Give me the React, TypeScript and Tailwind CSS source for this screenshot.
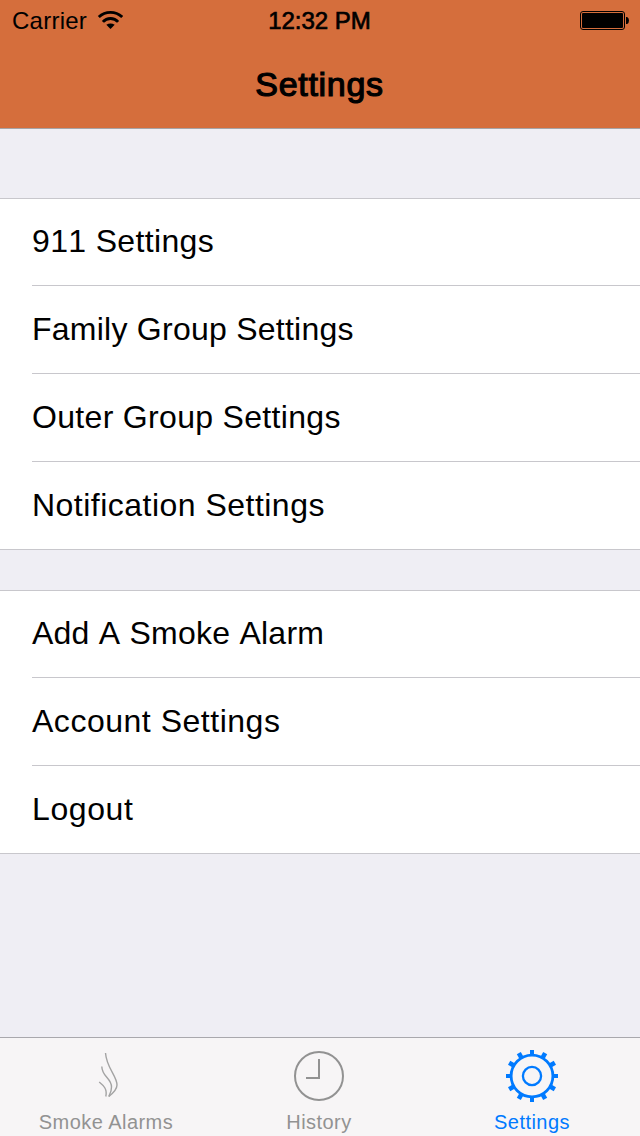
type Row = { label: string; tracking: string };

const alertRows: Row[] = [
  { label: "911 Settings", tracking: "tracking-[0.35px] [font-kerning:none]" },
  { label: "Family Group Settings", tracking: "tracking-[0.25px]" },
  { label: "Outer Group Settings", tracking: "tracking-[0.32px]" },
  { label: "Notification Settings", tracking: "tracking-[0.48px]" },
];

const accountRows: Row[] = [
  { label: "Add A Smoke Alarm", tracking: "tracking-[0.24px] [font-kerning:none]" },
  { label: "Account Settings", tracking: "tracking-[0.52px]" },
  { label: "Logout", tracking: "tracking-[0.6px]" },
];

function Group({ rows }: { rows: Row[] }) {
  return (
    <ul className="border-b border-[#c8c7cc] bg-white">
      {rows.map((row, i) => (
        <li
          key={row.label}
          className={
            i === 0
              ? "flex h-[87px] border-t border-[#c8c7cc] pl-8"
              : "flex h-[88px] pl-8"
          }
        >
          <div
            className={`flex flex-1 items-center whitespace-nowrap pb-[2px] text-[32px] leading-none text-black ${row.tracking} ${
              i === 0 ? "" : "border-t border-[#c8c7cc]"
            }`}
          >
            {row.label}
          </div>
        </li>
      ))}
    </ul>
  );
}

function Wifi() {
  return (
    <svg width="26" height="20" viewBox="0 0 26 20" fill="none" stroke="#000" strokeWidth="2.9">
      <path d="M1.800 7A17 17 0 0 1 25.200 7" />
      <path d="M5.900 11.900A10.200 10.200 0 0 1 21.100 11.900" />
      <path d="M13.500 19L9.300 14.800Q13.500 12 17.700 14.800Z" fill="#000" stroke="none" />
    </svg>
  );
}

function Battery() {
  return (
    <svg width="50" height="20" viewBox="0 0 50 20">
      <rect x="0.5" y="1.5" width="44" height="18" rx="2.5" fill="none" stroke="#000" />
      <rect x="2" y="3" width="41" height="15" rx="1" />
      <path d="M46 7h1.200q1.800 1 1.800 3.500t-1.800 3.500H46z" />
    </svg>
  );
}

function SmokeIcon() {
  return (
    <svg width="52" height="52" viewBox="0 0 52 52" fill="none" stroke="#a3a3a3" strokeWidth="1.4">
      <path d="M25.500 3C26.500 18 37 26 37 35C37 40 32 44 28.800 46.500" />
      <path d="M21.800 16.500C22 27 31.500 28 31.500 37C31.500 42 29.500 44.500 28.800 46.500" />
      <path d="M19.200 32C23.500 35.500 27.500 39 25.800 46.500" />
    </svg>
  );
}

function ClockIcon() {
  return (
    <svg width="52" height="52" viewBox="0 0 52 52" fill="none" stroke="#929292" strokeWidth="2">
      <circle cx="26" cy="26" r="24" />
      <path d="M26 9V28H13" />
    </svg>
  );
}

const teeth = [0, 30, 60, 90, 120, 150, 180, 210, 240, 270, 300, 330];

function GearIcon() {
  return (
    <svg width="52" height="52" viewBox="0 0 52 52" fill="none" stroke="#007aff">
      <circle cx="26" cy="26" r="20.900" strokeWidth="2.800" />
      <circle cx="26" cy="26" r="9.100" strokeWidth="2.300" />
      {teeth.map((a) => (
        <path
          key={a}
          d={a % 90 === 0 ? "M26 0V5" : "M26 -0.400V5"}
          strokeWidth={a % 90 === 0 ? 4 : 4.6}
          transform={`rotate(${a} 26 26)`}
        />
      ))}
    </svg>
  );
}

export default function App() {
  return (
    <div className="flex h-[1136px] w-[640px] flex-col overflow-hidden bg-[#efeef4] font-['Liberation_Sans',Arial,sans-serif]">
      <header className="flex h-[129px] flex-col border-b border-[#a7a3a5] bg-[#d56e3c] text-black">
        <div className="grid h-10 grid-cols-3 items-center">
          <div className="flex items-center gap-[10px] pl-3">
            <span className="pt-[2px] text-[24px] leading-[38px] tracking-[0.25px]">Carrier</span>
            <Wifi />
          </div>
          <div className="pt-[2px] pr-px text-center text-[24px] leading-[38px] whitespace-nowrap [-webkit-text-stroke:0.7px_#000]">
            12:32 PM
          </div>
          <div className="flex justify-end pr-[10px]">
            <Battery />
          </div>
        </div>
        <h1 className="pr-px text-center text-[34px] leading-[88px] tracking-[0.7px] [-webkit-text-stroke:1.2px_#000]">
          Settings
        </h1>
      </header>

      <main className="flex flex-1 flex-col gap-10 pt-[69px]">
        <Group rows={alertRows} />
        <Group rows={accountRows} />
      </main>

      <nav className="flex h-[99px] border-t border-[#a9a8ad] bg-[#f7f5f6] text-[20px] leading-6 text-[#929292]">
        <div className="flex w-[212px] flex-col items-center pt-3">
          <SmokeIcon />
          <span className="mt-2 tracking-[0.45px]">Smoke Alarms</span>
        </div>
        <div className="flex w-[214px] flex-col items-center pt-3">
          <ClockIcon />
          <span className="mt-2 tracking-[0.45px]">History</span>
        </div>
        <div className="flex w-[212px] flex-col items-center pt-3 text-[#007aff]">
          <GearIcon />
          <span className="mt-2 tracking-[0.45px]">Settings</span>
        </div>
      </nav>
    </div>
  );
}
